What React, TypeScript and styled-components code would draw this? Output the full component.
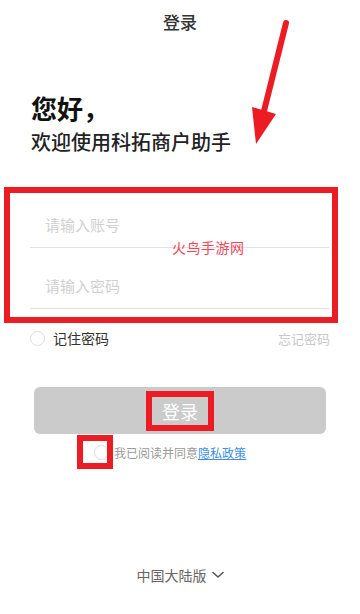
import * as React from 'react';
import styled, { createGlobalStyle } from 'styled-components';

const RED = '#ec1c24';

const GlobalStyle = createGlobalStyle`
    html, body {
        margin: 0;
        padding: 0;
        background: #fff;
    }
    body {
        font-family: "Noto Sans CJK SC", "Noto Sans", sans-serif;
    }
`;

const Page = styled.div`
    position: relative;
    width: 360px;
    height: 614px;
    display: flex;
    flex-direction: column;
    background: #fff;
    overflow: hidden;
`;

const Header = styled.div`
    height: 42px;
    display: flex;
    align-items: center;
    justify-content: center;
    font-size: 17px;
    font-weight: 500;
    color: #333;
`;

const Greeting = styled.div`
    padding: 0 31px;
    margin-top: 49px;
    h1 {
        margin: 0;
        font-size: 26px;
        line-height: 34px;
        font-weight: 700;
        color: #111;
    }
    p {
        margin: 3px 0 0;
        font-size: 20px;
        line-height: 28px;
        font-weight: 500;
        color: #222;
    }
`;

const FormBox = styled.div`
    position: relative;
    margin: 31px 0 0 4px;
    width: 334px;
    box-sizing: border-box;
    border: 6px solid ${RED};
    padding: 14px 3px 8px 20px;
`;

const Field = styled.div<{ $first?: boolean }>`
    height: 40px;
    margin-top: ${p => (p.$first ? 0 : 20)}px;
    border-bottom: 1px solid #e3e3e3;
    display: flex;
    align-items: center;
    input {
        border: none;
        outline: none;
        background: transparent;
        padding: 0 0 5px 15px;
        width: 100%;
        font-family: inherit;
        font-size: 15px;
        color: #333;
        &::placeholder {
            color: #d0d0d0;
        }
    }
`;

const Watermark = styled.span`
    position: absolute;
    left: 162px;
    top: 44px;
    font-size: 14px;
    line-height: 20px;
    color: #f0455a;
    letter-spacing: 0.5px;
`;

const OptionRow = styled.div`
    height: 30px;
    padding: 0 30px;
    display: flex;
    align-items: center;
    justify-content: space-between;
`;

const CheckLabel = styled.label`
    display: flex;
    align-items: center;
    gap: 8px;
    font-size: 14px;
    color: #333;
`;

const Circle = styled.span`
    display: inline-block;
    width: 15px;
    height: 15px;
    box-sizing: border-box;
    border: 1px solid #dcdcdc;
    border-radius: 50%;
    background: #fff;
`;

const Forgot = styled.span`
    font-size: 13px;
    color: #c8c8c8;
`;

const LoginButton = styled.button`
    margin: 34px 34px 0;
    height: 47px;
    border: none;
    border-radius: 6px;
    background: #cbcbcb;
    display: flex;
    align-items: center;
    justify-content: center;
    padding: 0;
`;

const Marked = styled.span`
    box-sizing: border-box;
    width: 68px;
    height: 40px;
    border: 6px solid ${RED};
    display: flex;
    align-items: center;
    justify-content: center;
    font-family: "Noto Sans CJK SC", sans-serif;
    font-size: 18px;
    color: #fff;
`;

const AgreeRow = styled.div`
    height: 36px;
    padding-left: 94px;
    display: flex;
    align-items: center;
    gap: 5px;
    font-size: 12px;
    color: #9a9a9a;
    a {
        color: #3d8fe8;
        text-decoration: underline;
    }
`;

const CircleHolder = styled.span`
    position: relative;
    display: flex;
`;

const CircleMark = styled.span`
    position: absolute;
    left: -17px;
    top: -10px;
    width: 36px;
    height: 34px;
    box-sizing: border-box;
    border: 6px solid ${RED};
`;

const Footer = styled.div`
    margin-top: auto;
    padding-bottom: 29px;
    display: flex;
    align-items: center;
    justify-content: center;
    gap: 5px;
    font-size: 14px;
    line-height: 20px;
    color: #666;
`;

const Arrow = styled.svg`
    position: absolute;
    left: 0;
    top: 0;
    pointer-events: none;
`;

export default function App() {
    return (
        <Page>
            <GlobalStyle />
            <Header>登录</Header>

            <Greeting>
                <h1>您好，</h1>
                <p>欢迎使用科拓商户助手</p>
            </Greeting>

            <FormBox>
                <Field $first>
                    <input placeholder="请输入账号" />
                </Field>
                <Field>
                    <input type="password" placeholder="请输入密码" />
                </Field>
                <Watermark>火鸟手游网</Watermark>
            </FormBox>

            <OptionRow>
                <CheckLabel>
                    <Circle />
                    记住密码
                </CheckLabel>
                <Forgot>忘记密码</Forgot>
            </OptionRow>

            <LoginButton>
                <Marked>登录</Marked>
            </LoginButton>

            <AgreeRow>
                <CircleHolder>
                    <Circle />
                    <CircleMark />
                </CircleHolder>
                <span>我已阅读并同意<a>隐私政策</a></span>
            </AgreeRow>

            <Footer>
                中国大陆版
                <svg width="12" height="8" viewBox="0 0 12 8">
                    <path d="M1 1.5 L6 6 L11 1.5" fill="none" stroke="#555" strokeWidth="1.6" strokeLinecap="round" strokeLinejoin="round" />
                </svg>
            </Footer>

            <Arrow width="360" height="614" viewBox="0 0 360 614">
                <line x1="286" y1="23" x2="263" y2="115" stroke={RED} strokeWidth="6" strokeLinecap="round" />
                <polygon points="252,107 276,114 256,144" fill={RED} />
            </Arrow>
        </Page>
    );
}
